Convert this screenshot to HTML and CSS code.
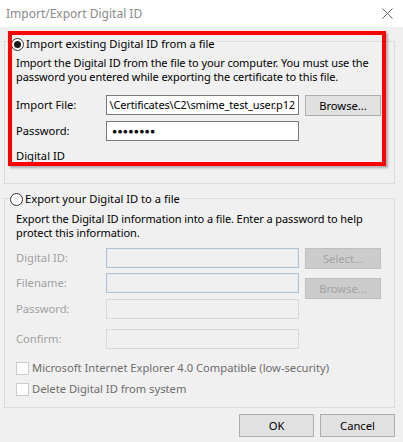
FILE: index.html
```html
<!DOCTYPE html>
<html>
<head>
<meta charset="utf-8">
<title>Import/Export Digital ID</title>
<link rel="stylesheet" href="styles.css">
</head>
<body>
<div class="dialog">
  <header class="titlebar">
    <span class="title">Import/Export Digital ID</span>
    <svg class="close" width="11" height="11" viewBox="0 0 11 11"><path d="M0.5 0.5L10.5 10.5M10.5 0.5L0.5 10.5" stroke="#5f5f5f" stroke-width="1"/></svg>
  </header>
  <main class="content">
    <div class="highlight-wrap">
      <fieldset class="group group-import">
        <legend class="legend legend-import"><span class="radio checked"></span><span>Import existing Digital ID from a file</span></legend>
        <p class="desc">Import the Digital ID from the file to your computer. You must use the password you entered while exporting the certificate to this file.</p>
        <div class="row row-first">
          <span class="label">Import File:</span>
          <div class="field"><span class="value">\Certificates\C2\smime_test_user.p12</span></div>
          <span class="btn">Browse...</span>
        </div>
        <div class="row row-gap6">
          <span class="label">Password:</span>
          <div class="field"><span class="dots">●●●●●●●●</span></div>
        </div>
        <div class="section-label">Digital ID</div>
      </fieldset>
      <div class="highlight"></div>
    </div>

    <fieldset class="group group-export">
      <legend class="legend legend-export"><span class="radio"></span><span>Export your Digital ID to a file</span></legend>
      <p class="desc desc-export">Export the Digital ID information into a file. Enter a password to help protect this information.</p>
      <div class="row row-first2">
        <span class="label disabled">Digital ID:</span>
        <div class="field field-off blue"></div>
        <span class="btn btn-off">Select...</span>
      </div>
      <div class="row row-gap5">
        <span class="label disabled">Filename:</span>
        <div class="field field-off blue"></div>
        <span class="btn btn-off btn-low">Browse...</span>
      </div>
      <div class="row row-gap6b">
        <span class="label disabled">Password:</span>
        <div class="field field-off"></div>
      </div>
      <div class="row row-gap10">
        <span class="label disabled">Confirm:</span>
        <div class="field field-off"></div>
      </div>
      <div class="check check-first"><span class="box"></span><span>Microsoft Internet Explorer 4.0 Compatible (low-security)</span></div>
      <div class="check"><span class="box"></span><span>Delete Digital ID from system</span></div>
    </fieldset>

    <footer class="footer">
      <span class="btn btn-foot">OK</span>
      <span class="btn btn-foot">Cancel</span>
    </footer>
  </main>
</div>
</body>
</html>
```

FILE: styles.css
```css
* { box-sizing: border-box; }
html, body {
  margin: 0;
  padding: 0;
  background: #f0f0f0;
}
body {
  font-family: "Noto Sans", "Open Sans", sans-serif;
  font-size: 11px;
  line-height: 14px;
  color: #000;
  width: 403px;
  height: 442px;
  overflow: hidden;
}
.titlebar {
  height: 27px;
  background: #fff;
  display: flex;
  align-items: center;
  justify-content: space-between;
  padding: 0 10px 0 6px;
}
.title {
  font-size: 12px;
  color: #8a8a8a;
  padding-top: 1px;
}
.close { display: block; }

.content {
  padding: 3px 8px 0 4px;
}
.highlight-wrap {
  position: relative;
}
.highlight {
  position: absolute;
  left: 4px;
  top: 1px;
  width: 378px;
  height: 135px;
  border: 4px solid #ff0000;
  box-shadow: 2px 2px 2px rgba(0,0,0,0.28);
  pointer-events: none;
}
.group {
  margin: 0;
  border: 1px solid #dcdcdc;
  padding: 0 8px 0 11px;
  min-width: 0;
}
.legend {
  display: flex;
  align-items: center;
  gap: 2px;
  margin-left: -5px;
  padding: 0 2px 0 0;
  line-height: 16px;
  font-size: 11.2px;
}
.legend-import { padding-top: 6px; }
.legend-export { padding-top: 2px; margin-left: -6px; }
.radio {
  width: 13px;
  height: 13px;
  border-radius: 50%;
  border: 1px solid #333;
  background: #fff;
  display: inline-flex;
  align-items: center;
  justify-content: center;
  flex: none;
}
.radio.checked::after {
  content: "";
  width: 7px;
  height: 7px;
  border-radius: 50%;
  background: #1a1a1a;
}
.desc {
  margin: 4px 0 0;
  padding-left: 0;
  font-size: 11px;
  letter-spacing: -0.1px;
}
.desc-export { margin-top: 5px; }
.row {
  display: flex;
  align-items: flex-start;
  height: 20px;
}
.row-first { margin-top: 11px; }
.row-gap6 { margin-top: 6px; }
.row-first2 { margin-top: 8px; }
.row-gap5 { margin-top: 5px; }
.row-gap6b { margin-top: 6px; }
.row-gap10 { margin-top: 10px; }
.label {
  width: 90px;
  flex: none;
  line-height: 20px;
  padding-left: 0;
  font-size: 11.2px;
}
.label.disabled { color: #a0a0a0; }
.field {
  width: 193px;
  height: 20px;
  flex: none;
  border: 1px solid #7a7a7a;
  background: #fff;
  display: flex;
  justify-content: flex-end;
  align-items: center;
  overflow: hidden;
  white-space: nowrap;
}
.field .value {
  padding-right: 3px;
  font-size: 11px;
  letter-spacing: -0.15px;
}
.field .dots {
  margin-right: auto;
  padding-left: 5px;
  font-size: 8.5px;
  letter-spacing: 0.3px;
  color: #111;
}
.field-off {
  background: #f0f0f0;
  border-color: #d9d9d9;
}
.field-off.blue {
  border-color: #b3c2d4;
  box-shadow: inset 0 0 0 1px #e6ebf1;
}
.btn {
  margin-left: 6px;
  width: 76px;
  height: 21px;
  flex: none;
  border: 1px solid #adadad;
  background: #e1e1e1;
  display: flex;
  align-items: center;
  justify-content: center;
  font-size: 11.2px;
}
.btn-off {
  background: #cccccc;
  border-color: #bfbfbf;
  color: #a3a3a3;
}
.btn-low { margin-top: 5px; }
.section-label {
  margin-top: 8px;
  padding-left: 0;
  font-size: 11.2px;
}
.group-import { padding-bottom: 20px; }
.group-export { margin-top: 5px; padding-bottom: 8px; }
.check {
  display: flex;
  align-items: center;
  gap: 3px;
  height: 20px;
  margin-top: 1px;
  color: #6d6d6d;
  font-size: 11.2px;
}
.check-first { margin-top: 9px; }
.box {
  width: 13px;
  height: 13px;
  border: 1px solid #cccccc;
  background: #fff;
  flex: none;
}
.footer {
  display: flex;
  justify-content: flex-end;
  gap: 6px;
  margin-top: 6px;
  padding-right: 0;
}
.btn-foot {
  margin-left: 0;
  width: 75px;
  height: 23px;
}
```
